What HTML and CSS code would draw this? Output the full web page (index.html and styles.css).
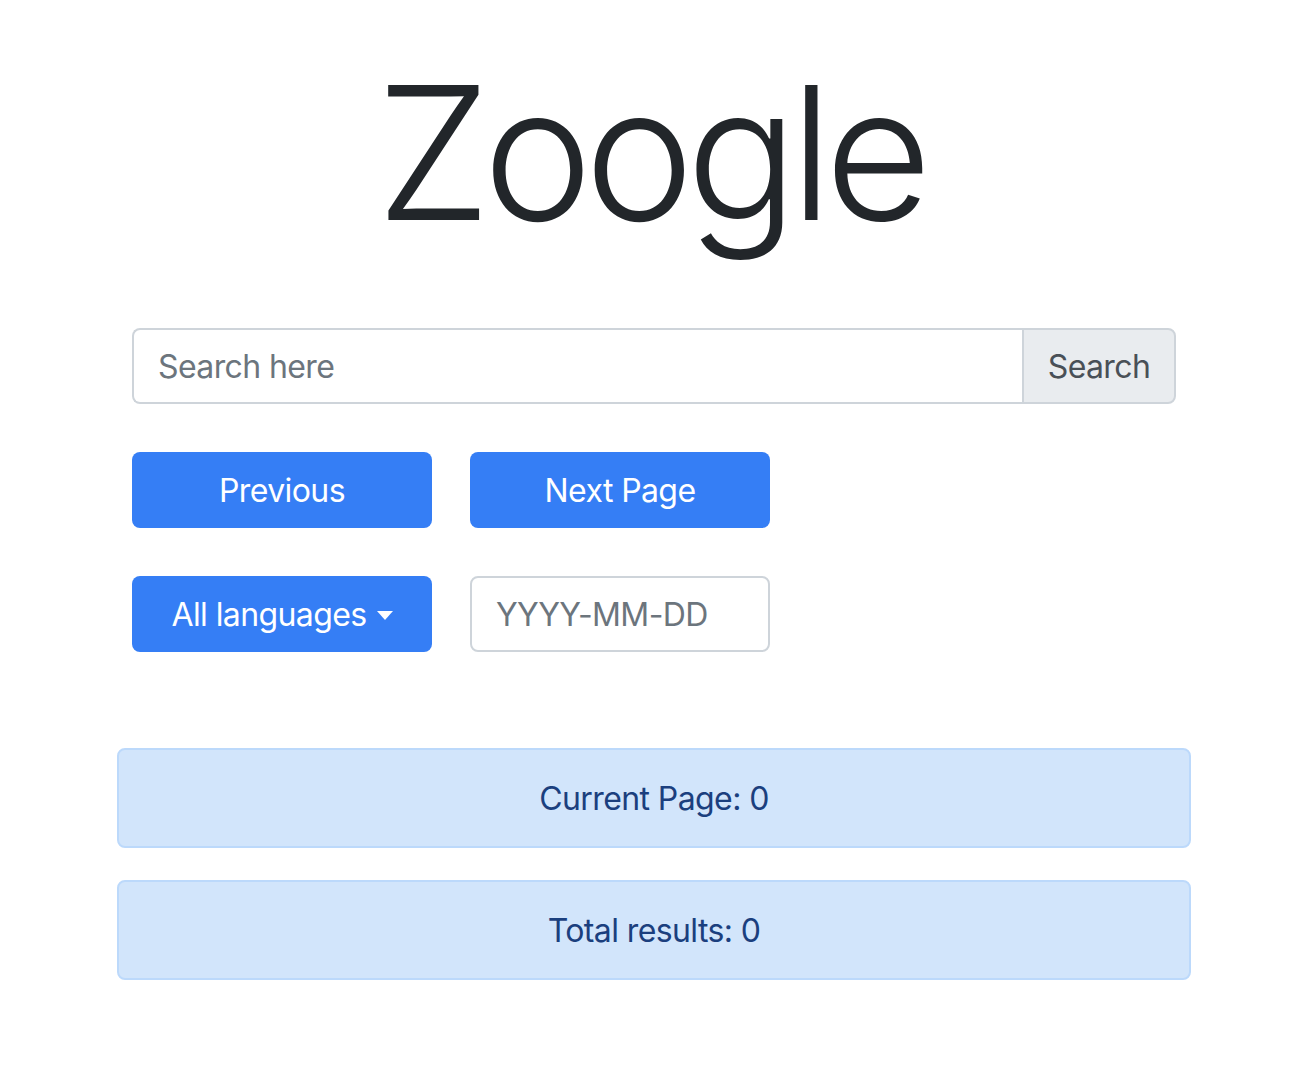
FILE: index.html
```html
<!DOCTYPE html>
<html lang="en">
<head>
<meta charset="utf-8">
<title>Zoogle</title>
<link rel="stylesheet" href="styles.css">
</head>
<body>
<main class="page">
  <h1 class="brand">Zoogle</h1>
  <form class="form">
    <div class="input-group">
      <input class="search-input" type="text" placeholder="Search here">
      <button class="search-btn" type="button">Search</button>
    </div>
    <div class="row">
      <button class="btn-primary" type="button">Previous</button>
      <button class="btn-primary" type="button">Next Page</button>
    </div>
    <div class="row">
      <button class="btn-primary" type="button">All languages<span class="caret"></span></button>
      <input class="date-input" type="text" placeholder="YYYY-MM-DD">
    </div>
  </form>
  <div class="alert">Current Page: 0</div>
  <div class="alert">Total results: 0</div>
</main>
</body>
</html>
```
FILE: styles.css
```css
* { box-sizing: border-box; }
html, body { margin: 0; padding: 0; background: #fff; }
body {
  font-family: Inter, "Open Sans", "Liberation Sans", sans-serif;
  color: #212529;
  letter-spacing: -0.6px;
}
.page {
  width: 1074px;
  margin: 0 0 0 117px;
  padding-top: 42px;
}
.brand {
  margin: 0;
  font-size: 185px;
  font-weight: 300;
  line-height: 222px;
  text-align: center;
  color: #22262a;
  letter-spacing: -8px;
  padding-right: 8px;
}
.form {
  padding: 0 15px;
  margin-top: 64px;
}
.input-group {
  display: flex;
  height: 76px;
}
.search-input {
  flex: 1;
  min-width: 0;
  height: 76px;
  border: 2px solid #ced4da;
  border-right: none;
  border-radius: 8px 0 0 8px;
  padding: 0 24px;
  font: inherit;
  font-size: 32px;
  letter-spacing: -0.6px;
  color: #495057;
  outline: none;
}
.search-input::placeholder, .date-input::placeholder { color: #6c757d; opacity: 1; }
.search-btn {
  width: 154px;
  height: 76px;
  border: 2px solid #ced4da;
  border-radius: 0 8px 8px 0;
  background: #e9ecef;
  color: #495057;
  font: inherit;
  font-size: 32px;
  letter-spacing: -0.6px;
  padding: 0;
}
.row {
  display: flex;
  gap: 38px;
  margin-top: 48px;
}
.btn-primary {
  width: 300px;
  height: 76px;
  border: none;
  border-radius: 8px;
  background: #357ef5;
  color: #fff;
  font: inherit;
  font-size: 32px;
  letter-spacing: -0.6px;
  padding: 0;
  display: inline-flex;
  align-items: center;
  justify-content: center;
}
.caret {
  display: inline-block;
  margin-left: 10px;
  margin-top: 2px;
  border-top: 9px solid #fff;
  border-left: 8px solid transparent;
  border-right: 8px solid transparent;
}
.date-input {
  width: 300px;
  height: 76px;
  border: 2px solid #ced4da;
  border-radius: 8px;
  padding: 0 24px;
  font: inherit;
  font-size: 32px;
  letter-spacing: -0.6px;
  outline: none;
}
.alert {
  height: 100px;
  margin-top: 96px;
  border: 2px solid #bcd9fb;
  border-radius: 8px;
  background: #d2e5fb;
  color: #1b3f7e;
  font-size: 32px;
  display: flex;
  align-items: center;
  justify-content: center;
}
.alert + .alert { margin-top: 32px; }
```
